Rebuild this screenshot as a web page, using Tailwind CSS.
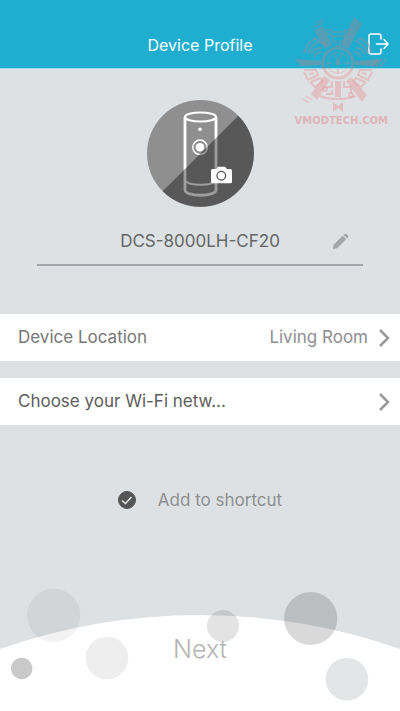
<!DOCTYPE html>
<html lang="en">
<head>
    <meta charset="UTF-8">
    <meta name="viewport" content="width=device-width, initial-scale=1.0">
    <title>Device Profile</title>
    <script src="https://cdn.jsdelivr.net/npm/@tailwindcss/browser@4"></script>
</head>
<body class="bg-[#dde1e4] font-['Inter','Liberation_Sans',sans-serif] text-[#666]">
    <div class="relative flex min-h-screen flex-col">
        <!-- Header -->
        <header class="grid h-[69px] grid-cols-[1fr_auto_1fr] items-end border-b border-[#9fdbe8] bg-[#1fadd0] px-[11px] pb-[13px]">
            <h1 class="col-start-2 text-base leading-5 text-white">Device Profile</h1>
            <button type="button" aria-label="Exit" class="justify-self-end">
                <svg class="h-[22px] w-[21px]" viewBox="0 0 21 22" fill="none" stroke="#fff" stroke-width="1.5" stroke-linecap="round" stroke-linejoin="round">
                    <path d="M13 6V3a2 2 0 0 0-2-2H3a2 2 0 0 0-2 2v16a2 2 0 0 0 2 2h8a2 2 0 0 0 2-2v-3"/>
                    <path d="M8.500 11H20M16 6.500l4 4.500-4 4.500"/>
                </svg>
            </button>
        </header>

        <main class="flex flex-col">
            <!-- Device picture and name -->
            <button type="button" aria-label="Change device picture" class="mt-[31px] self-center">
                <svg class="size-[107px]" viewBox="0 0 107 107" fill="none">
                    <circle cx="53.500" cy="53.500" r="53.500" fill="#8f8f8f"/>
                    <g stroke="#fff">
                        <path d="M38 17v73c0 7 31 7 31 0V17" stroke-width="2.800"/>
                        <ellipse cx="53.500" cy="17" rx="15.500" ry="4.500" stroke-width="2.200"/>
                        <path d="M39 81c3 5 26 5 29 0" stroke-width="2"/>
                        <circle cx="53" cy="47.300" r="7.200" stroke-width="1.500"/>
                    </g>
                    <path d="M91.330 15.670A53.500 53.500 0 0 1 15.670 91.330Z" fill="#000" opacity=".385"/>
                    <circle cx="53" cy="29.300" r="1.700" fill="#fff"/>
                    <circle cx="53" cy="47.300" r="4.300" fill="#fff"/>
                    <path d="M65.500 69H69l2-2.300h7L80 69h3.500A1.500 1.500 0 0 1 85 70.500v11.300a1.500 1.500 0 0 1-1.500 1.500h-18a1.500 1.500 0 0 1-1.500-1.500V70.500A1.500 1.500 0 0 1 65.500 69Z" fill="#fff"/>
                    <circle cx="74.300" cy="75.700" r="4.300" stroke="#585858" stroke-width="1.300"/>
                </svg>
            </button>
            <div class="mx-[37px] mt-[22px] grid grid-cols-[1fr_auto_1fr] items-center border-b-2 border-[#a4a7ab] pb-[11px]">
                <input type="text" aria-label="Device name" value="DCS-8000LH-CF20" class="col-start-2 w-[180px] text-center text-[17px] leading-6 outline-none">
                <button type="button" aria-label="Edit name" class="mr-[14px] justify-self-end">
                    <svg class="size-[17px]" viewBox="0 0 18 18" fill="#a5a5a5">
                        <path d="M1 17l.700-4.500L11.300 3 15 6.700 5.500 16.200Z"/>
                        <path d="M12.200 2.100l.900-.900c.800-.700 1.900-.700 2.600 0l1.100 1.100c.700.700.700 1.800 0 2.600l-.900.900Z"/>
                    </svg>
                </button>
            </div>

            <!-- Settings -->
            <div class="mt-12 flex flex-col gap-[17px]">
                <button type="button" class="flex h-[47px] items-center bg-white pr-[10px] pl-[18px] text-[17px] text-[#777]">
                    <span class="flex-1 text-left">Device Location</span>
                    <span class="mr-[10px] text-[#8e8e93]">Living Room</span>
                    <svg class="h-[18px] w-3" viewBox="0 0 12 18" fill="none" stroke="#999" stroke-width="2.500"><path d="M2 1l8 8-8 8"/></svg>
                </button>
                <button type="button" class="flex h-[47px] items-center bg-white pr-[10px] pl-[18px] text-[17px] text-[#5c5c5c]">
                    <span class="flex-1 text-left">Choose your Wi-Fi netw...</span>
                    <svg class="h-[18px] w-3" viewBox="0 0 12 18" fill="none" stroke="#999" stroke-width="2.500"><path d="M2 1l8 8-8 8"/></svg>
                </button>
            </div>

            <label class="mt-[63px] flex items-center gap-[22px] self-center text-[17px] leading-6 text-[#8e8f90]">
                <span class="grid">
                    <input type="checkbox" checked class="peer col-start-1 row-start-1 size-[18px] appearance-none rounded-full border border-[#555] checked:bg-[#555]">
                    <svg class="pointer-events-none invisible col-start-1 row-start-1 size-[18px] peer-checked:visible" viewBox="0 0 18 18" fill="none" stroke="#e4e7e9" stroke-width="1.600"><path d="M4 9.500l3.500 3L13.500 6"/></svg>
                </span>
                Add to shortcut
            </label>
        </main>

        <!-- Curved footer with bubbles -->
        <footer class="mt-auto grid">
            <svg class="col-start-1 row-start-1 w-full" viewBox="0 0 400 125" aria-hidden="true">
                <path d="M0 63A605 605 0 0 1 400 63V125H0Z" fill="#fff"/>
                <circle cx="53.700" cy="29.300" r="26.700" fill="#000" opacity=".05"/>
                <circle cx="21.700" cy="82.500" r="10.700" fill="#c9c9c9"/>
                <circle cx="107" cy="72" r="21.300" fill="#eee"/>
                <circle cx="223" cy="40" r="16" fill="#000" opacity=".11"/>
                <circle cx="310.700" cy="32.500" r="26.600" fill="#000" opacity=".15"/>
                <circle cx="347" cy="93.300" r="21.300" fill="#e3e5e6"/>
            </svg>
            <button type="button" class="z-10 col-start-1 row-start-1 self-center justify-self-center text-[25px] leading-8 font-light text-[#b4b4b4]">Next</button>
        </footer>

        <!-- Watermark -->
        <div class="pointer-events-none absolute top-4 right-3 flex flex-col items-end">
            <svg class="h-24 w-[94px]" viewBox="0 0 94 96" fill="none" stroke="url(#mark)" stroke-width="2">
                <defs>
                    <linearGradient id="mark" gradientUnits="userSpaceOnUse" x1="0" y1="0" x2="0" y2="96">
                        <stop offset="0" stop-color="#7f8f9f" stop-opacity=".5"/>
                        <stop offset=".54" stop-color="#a08c96" stop-opacity=".5"/>
                        <stop offset=".56" stop-color="#e5a0a3" stop-opacity=".5"/>
                        <stop offset="1" stop-color="#e5a0a3" stop-opacity=".55"/>
                    </linearGradient>
                </defs>
                <circle cx="44" cy="47" r="15" stroke-width="3"/>
                <circle cx="44" cy="47" r="10.500" stroke-width="1"/>
                <path d="M33.500 47H38M50 47h4.500M44 53v4M40 38l4 7 4-7" stroke-width="1.500"/>
                <circle cx="44" cy="47" r="2.500" fill="url(#mark)" stroke="none"/>
                <g fill="url(#mark)" stroke="none">
                    <path d="M1 43l26 2v4L7 50zM87 43l-26 2v4l19 1z"/>
                    <path d="M60 1l8 7-14 25-7-4zM20 14l9-4 9 19-7 4z"/>
                    <path d="M30 60l6 4-13 20-6-6zM57 61l-5 4 16 21 5-7z"/>
                    <path d="M41 65h6v16h-6zM39 86l5 4 5-4v10l-5-4-5 4z"/>
                </g>
                <path d="M37 21v-3h-4v-4h5v2h13v-2h5v4h-5v3M38 20h13l-1 5h-4v5h-4v-5h-3z" stroke-width="1.500"/>
                <path d="M10 37l4-9 7-6 6 5 5 1M14 37l4-7 6-4M17 38l4-5 7-1M20 41l3-4 5-1M78 37l-4-9-7-6-6 4M74 37l-4-7-6-4M71 38l-4-5-5-1M67 41l-3-4-4-1"/>
                <path d="M10 54h12l2 5-10 5-4-8M15 58l5-1M17 66l9-4 3 3-8 6-5-5M78 54H66l-2 5 10 5 4-8M73 58l-5-1M71 66l-9-4-3 3 8 6 5-5"/>
                <path d="M26 80c9 4 27 4 36 0M38 65v6h-6M50 65v6h7v6M32 78h6v-4"/>
                <circle cx="31" cy="73" r="2"/>
                <circle cx="57" cy="79" r="2"/>
                <path d="M20 11l9-4M22 7l7-3M86 51l6-8M82 51l6-8M78 51l6-8M9 83l6 4M12 80l6 4" stroke-width="1.500"/>
            </svg>
            <span class="mt-px font-['DejaVu_Sans',sans-serif] text-[10px] leading-4 font-bold text-[#e0a0a4]/70">VMODTECH.COM</span>
        </div>
    </div>
</body>
</html>
